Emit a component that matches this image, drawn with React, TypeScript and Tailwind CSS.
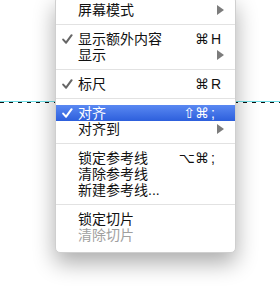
import React from 'react';

type Item = {
  label: string;
  checked?: boolean;
  mods?: string;
  keyChar?: string;
  submenu?: boolean;
  active?: boolean;
  disabled?: boolean;
};

const groups: Item[][] = [
  [{ label: '屏幕模式', submenu: true }],
  [
    { label: '显示额外内容', checked: true, mods: '⌘', keyChar: 'H' },
    { label: '显示', submenu: true },
  ],
  [{ label: '标尺', checked: true, mods: '⌘', keyChar: 'R' }],
  [
    { label: '对齐', checked: true, mods: '⇧⌘', keyChar: ';', active: true },
    { label: '对齐到', submenu: true },
  ],
  [
    { label: '锁定参考线', mods: '⌥⌘', keyChar: ';' },
    { label: '清除参考线' },
    { label: '新建参考线...' },
  ],
  [{ label: '锁定切片' }, { label: '清除切片', disabled: true }],
];

const Check = ({ active }: { active?: boolean }) => (
  <svg width="11" height="10" viewBox="0 0 11 10">
    <path
      d="M1.2 5.6 L4.1 8.7 L9.6 1.2"
      fill="none"
      stroke={active ? '#ffffff' : '#666666'}
      strokeWidth="2"
      strokeLinecap="round"
      strokeLinejoin="round"
    />
  </svg>
);

const Arrow = () => (
  <svg width="7" height="10" viewBox="0 0 7 10">
    <polygon points="0,0 7,5 0,10" fill="#7c7c7c" />
  </svg>
);

const MenuRow = ({ item }: { item: Item }) => {
  const textColor = item.active ? 'text-white' : item.disabled ? 'text-[#a0a0a0]' : 'text-[#111]';
  return (
    <div
      className={`flex items-center h-[16px] ${textColor} ${
        item.active ? 'bg-linear-to-b from-[#5a88f2] to-[#2d5fdc]' : ''
      }`}
    >
      <div className="w-[22px] pl-[6px] flex items-center">{item.checked && <Check active={item.active} />}</div>
      <div className="flex-1 leading-none whitespace-nowrap">{item.label}</div>
      <div className="font-['DejaVu_Sans',sans-serif] text-[14px] leading-none text-right pr-[2px]">{item.mods}</div>
      <div className="w-[14px] flex items-center font-['Liberation_Sans',sans-serif] text-[14px] leading-none">
        {item.keyChar}
        {item.submenu && (
          <span className="ml-auto mr-[1px] flex">
            <Arrow />
          </span>
        )}
      </div>
      <div className="w-[10px]" />
    </div>
  );
};

export default function App() {
  return (
    <div className="relative w-[280px] h-[291px] bg-white overflow-hidden font-['Liberation_Sans','Noto_Sans_CJK_SC',sans-serif] text-[14px]">
      {/* guide line on the canvas */}
      <div className="absolute left-0 right-0 top-[101px] h-px bg-[#6fdfe8]" />
      <div className="absolute left-0 right-0 top-[102px] h-px bg-[repeating-linear-gradient(to_right,#111_0px,#111_4px,transparent_4px,transparent_9px)]" />

      <div className="absolute left-[55px] top-[-4px] w-[181px] bg-white border border-[#cfcfcf] rounded-[5px] pt-[5px] pb-[9px] shadow-[0_10px_22px_rgba(0,0,0,0.33)]">
        {groups.map((g, gi) => (
          <div key={gi}>
            {gi > 0 && (
              <div className="pt-[6px] pb-[6px]">
                <div className="h-px bg-[#e2e2e2]" />
              </div>
            )}
            {g.map((item) => (
              <MenuRow key={item.label} item={item} />
            ))}
          </div>
        ))}
      </div>
    </div>
  );
}
